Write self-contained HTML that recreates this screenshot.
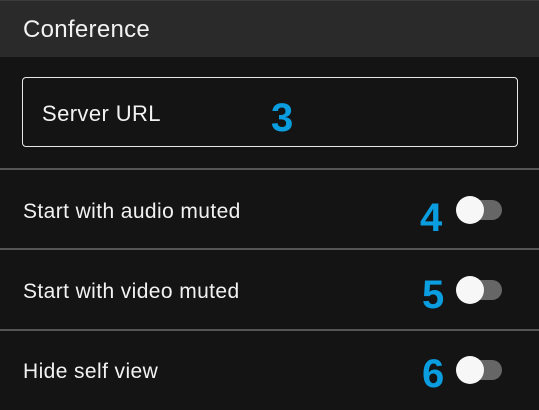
<html><head><style>
body{margin:0;width:539px;height:410px;background:#141414;font-family:"Liberation Sans",sans-serif;color:#f2f2f2;position:relative;overflow:hidden}
.hdr{position:absolute;left:0;top:0;width:539px;height:57px;background:#2a2a2a;border-top:1px solid #3a3a3a;box-sizing:border-box}
.hdr span{position:absolute;left:23px;top:15px;font-size:24px;letter-spacing:0.3px}
.box{position:absolute;left:22px;top:77px;width:496px;height:70px;border:1.5px solid #e8e8e8;border-radius:4px;box-sizing:border-box}
.t{position:absolute;font-size:21px;letter-spacing:0.4px}
.n{position:absolute;color:#0a9de0;font-weight:bold;font-size:40px}
.hr{position:absolute;left:0;width:539px;height:2px;background:#555}
.tr{position:absolute;left:468px;width:34px;height:20px;border-radius:10px;background:#666}
.kn{position:absolute;left:456px;width:28px;height:28px;border-radius:50%;background:#f7f7f7}
</style></head><body>
<div class="hdr"><span>Conference</span></div>
<div class="box"></div>
<div class="t" style="left:42px;top:101px;font-size:22px">Server URL</div>
<div class="n" style="left:271px;top:96px">3</div>
<div class="hr" style="top:168px"></div>
<div class="hr" style="top:248px"></div>
<div class="hr" style="top:329px"></div>
<div class="t" style="left:23px;top:200px">Start with audio muted</div>
<div class="t" style="left:23px;top:280px">Start with video muted</div>
<div class="t" style="left:23px;top:360px">Hide self view</div>
<div class="n" style="left:420px;top:196px">4</div>
<div class="n" style="left:422px;top:273px">5</div>
<div class="n" style="left:422px;top:352px">6</div>
<div class="tr" style="top:200px"></div><div class="kn" style="top:196px"></div>
<div class="tr" style="top:280px"></div><div class="kn" style="top:276px"></div>
<div class="tr" style="top:360px"></div><div class="kn" style="top:356px"></div>
</body></html>
